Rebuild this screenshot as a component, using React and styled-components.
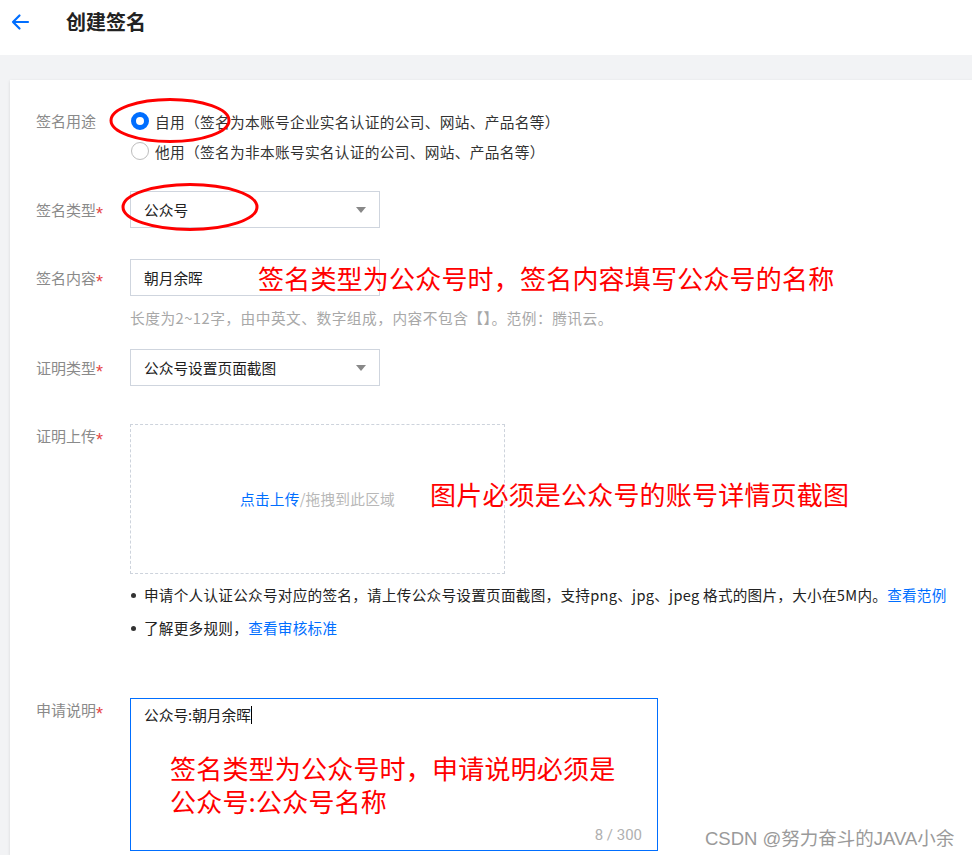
import React from "react";
import styled, { createGlobalStyle } from "styled-components";

const Global = createGlobalStyle`
  html, body { margin: 0; padding: 0; }
  body {
    background: #f2f3f5;
    font-family: Roboto, "Noto Sans CJK SC", sans-serif;
    width: 972px;
    height: 855px;
    overflow: hidden;
  }
`;

const Page = styled.div`
  display: flex;
  flex-direction: column;
  width: 972px;
  height: 855px;
  overflow: hidden;
  position: relative;
`;

const Header = styled.div`
  height: 55px;
  background: #fff;
  display: flex;
  align-items: flex-start;
  padding-top: 12px;
  box-sizing: border-box;
`;

const Back = styled.div`
  width: 66px;
  height: 20px;
  display: flex;
  align-items: center;
  padding-left: 10px;
  box-sizing: border-box;
`;

const Title = styled.h1`
  margin: 0;
  font-size: 20px;
  line-height: 20px;
  font-weight: 700;
  color: #222;
  font-family: "Noto Sans CJK SC", sans-serif;
`;

const Card = styled.div`
  margin: 25px 0 0 10px;
  flex: 1;
  background: #fff;
  box-shadow: 0 1px 3px rgba(0, 0, 0, 0.12);
  padding: 26px 0 0 26px;
  position: relative;
`;

const Row = styled.div`
  display: flex;
  align-items: flex-start;
  margin-top: ${(p) => p.$mt || 0}px;
  position: relative;
`;

const Label = styled.div`
  width: 94px;
  height: ${(p) => p.$lh || 24}px;
  flex-shrink: 0;
  font-size: 15px;
  color: #8a8a8a;
  line-height: ${(p) => p.$lh || 24}px;
  font-family: "Noto Sans CJK SC", sans-serif;
  white-space: nowrap;
`;

const Star = styled.span`
  color: #e54545;
  font-size: 18px;
  line-height: 1;
  vertical-align: -4px;
  font-family: "Liberation Sans", sans-serif;
`;

const Control = styled.div`
  display: flex;
  flex-direction: column;
  position: relative;
`;

const RadioLine = styled.label`
  display: flex;
  align-items: center;
  height: 30px;
  gap: 6px;
  font-size: 14.7px;
  letter-spacing: 0.3px;
  color: #333;
  font-family: "Noto Sans CJK SC", sans-serif;
`;

const RadioDot = styled.span`
  width: 18px;
  height: 18px;
  box-sizing: border-box;
  border-radius: 50%;
  margin-left: 1px;
  background: #fff;
  border: ${(p) => (p.$on ? "5px solid #006eff" : "1px solid #bdbdbd")};
`;

const Box = styled.div`
  width: ${(p) => p.$w || 250}px;
  height: 37px;
  box-sizing: border-box;
  border: 1px solid #cfd5de;
  display: flex;
  align-items: center;
  justify-content: space-between;
  padding: 0 13px 0 13px;
  font-size: 14.7px;
  color: #222;
  font-family: "Noto Sans CJK SC", sans-serif;
`;

const Arrow = styled.span`
  width: 0;
  height: 0;
  border-left: 5px solid transparent;
  border-right: 5px solid transparent;
  border-top: 6px solid #888;
`;

const Hint = styled.div`
  margin-top: 12px;
  height: 20px;
  line-height: 20px;
  font-size: 14.7px;
  letter-spacing: 0.5px;
  color: #a8a8a8;
  font-family: "Noto Sans CJK SC", sans-serif;
  white-space: nowrap;
`;

const Upload = styled.div`
  width: 375px;
  height: 150px;
  box-sizing: border-box;
  border: 1px dashed #cdd3dc;
  display: flex;
  align-items: center;
  justify-content: center;
  font-size: 14.7px;
  letter-spacing: 0.2px;
  font-family: "Noto Sans CJK SC", sans-serif;
  color: #b8b8b8;
  padding-bottom: 2px;
`;

const Link = styled.span`
  color: #006eff;
`;

const Bullets = styled.ul`
  list-style: none;
  margin: 11px 0 0 94px;
  padding: 0;
  display: flex;
  flex-direction: column;
  gap: 13px;
`;

const Bullet = styled.li`
  display: flex;
  align-items: center;
  height: 20px;
  line-height: 20px;
  font-size: 14.6px;
  letter-spacing: 0.28px;
  color: #222;
  font-family: "Noto Sans CJK SC", sans-serif;
  white-space: nowrap;
  &::before {
    content: "";
    width: 5px;
    height: 5px;
    border-radius: 50%;
    background: #333;
    margin: 0 8px 0 1px;
  }
`;

const TextArea = styled.div`
  width: 528px;
  height: 153px;
  box-sizing: border-box;
  border: 1px solid #006eff;
  padding: 5px 13px;
  position: relative;
  font-size: 14.7px;
  color: #222;
  font-family: "Noto Sans CJK SC", sans-serif;
  line-height: 22px;
`;

const Caret = styled.span`
  display: inline-block;
  width: 1px;
  height: 18px;
  background: #000;
  vertical-align: -3px;
`;

const Counter = styled.span`
  position: absolute;
  right: 15px;
  bottom: 4px;
  font-size: 15px;
  color: #b0b0b0;
  font-family: Roboto, sans-serif;
`;

const Note = styled.div`
  position: absolute;
  left: ${(p) => p.$x}px;
  top: ${(p) => p.$y}px;
  color: #ff0000;
  font-size: 26px;
  letter-spacing: 0.2px;
  line-height: 33px;
  font-family: "Noto Sans CJK SC", sans-serif;
  white-space: nowrap;
  pointer-events: none;
`;

const Marks = styled.svg`
  position: absolute;
  left: 0;
  top: 0;
  pointer-events: none;
`;

const Watermark = styled.div`
  position: absolute;
  left: 705px;
  top: 824px;
  font-size: 18.5px;
  color: #9a9a9a;
  font-family: "Liberation Sans", "Noto Sans CJK SC", sans-serif;
  white-space: nowrap;
`;

export default function App() {
  return (
    <Page>
      <Global />
      <Header>
        <Back>
          <svg width="20" height="18" viewBox="0 0 20 18">
            <path d="M18 9H3M9.5 2.5L3 9l6.5 6.5" stroke="#006eff" strokeWidth="2.2" fill="none" strokeLinecap="round" strokeLinejoin="round" />
          </svg>
        </Back>
        <Title>创建签名</Title>
      </Header>
      <Card>
        <Row>
          <Label $lh={30}>签名用途</Label>
          <Control>
            <RadioLine>
              <RadioDot $on />
              自用（签名为本账号企业实名认证的公司、网站、产品名等）
            </RadioLine>
            <RadioLine>
              <RadioDot />
              他用（签名为非本账号实名认证的公司、网站、产品名等）
            </RadioLine>
          </Control>
        </Row>

        <Row $mt={25}>
          <Label $lh={37}>签名类型<Star>*</Star></Label>
          <Box>
            公众号
            <Arrow />
          </Box>
        </Row>

        <Row $mt={31}>
          <Label $lh={37}>签名内容<Star>*</Star></Label>
          <Control>
            <Box>朝月余晖</Box>
            <Hint>长度为2~12字，由中英文、数字组成，内容不包含【】。范例：腾讯云。</Hint>
          </Control>
          <Note $x={222} $y={2}>签名类型为公众号时，签名内容填写公众号的名称</Note>
        </Row>

        <Row $mt={21}>
          <Label $lh={37}>证明类型<Star>*</Star></Label>
          <Box>
            公众号设置页面截图
            <Arrow />
          </Box>
        </Row>

        <Row $mt={38}>
          <Label $lh={24}>证明上传<Star>*</Star></Label>
          <Upload>
            <Link>点击上传</Link>/拖拽到此区域
          </Upload>
          <Note $x={394} $y={53}>图片必须是公众号的账号详情页截图</Note>
        </Row>

        <Bullets>
          <Bullet>
            申请个人认证公众号对应的签名，请上传公众号设置页面截图，支持png、jpg、jpeg 格式的图片，大小在5M内。<Link>查看范例</Link>
          </Bullet>
          <Bullet>
            了解更多规则，<Link>查看审核标准</Link>
          </Bullet>
        </Bullets>

        <Row $mt={60}>
          <Label $lh={24}>申请说明<Star>*</Star></Label>
          <TextArea>
            公众号:朝月余晖<Caret />
            <Counter>8 / 300</Counter>
          </TextArea>
          <Note $x={134} $y={53}>
            签名类型为公众号时，申请说明必须是
            <br />
            公众号:公众号名称
          </Note>
        </Row>

        <Marks width="300" height="170">
          <ellipse cx="160" cy="40.5" rx="59" ry="21" stroke="#ff0000" strokeWidth="3" fill="none" />
          <ellipse cx="180" cy="127" rx="67" ry="22.5" stroke="#ff0000" strokeWidth="3" fill="none" />
        </Marks>
      </Card>
      <Watermark>CSDN @努力奋斗的JAVA小余</Watermark>
    </Page>
  );
}
